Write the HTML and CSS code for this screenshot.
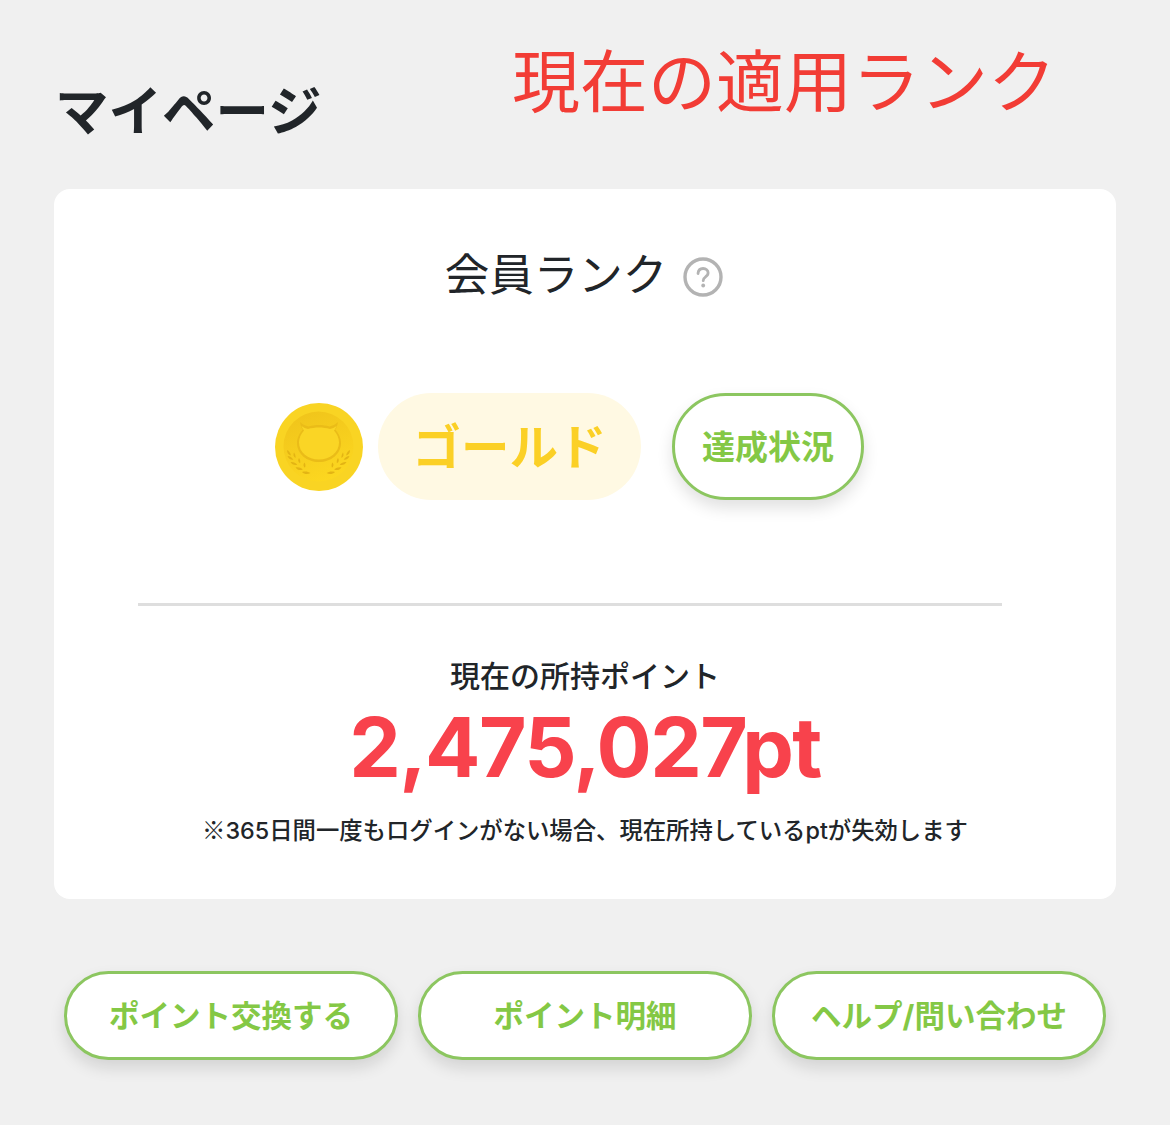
FILE: index.html
```html
<!DOCTYPE html>
<html lang="ja">
<head>
<meta charset="utf-8">
<title>マイページ</title>
<link rel="stylesheet" href="styles.css">
</head>
<body>
<main class="page">
  <div class="annotation">現在の適用ランク</div>
  <h1 class="title">マイページ</h1>
  <section class="card">
    <h2 class="rank-title">会員ランク
      <svg class="help" viewBox="0 0 40 40" aria-hidden="true"><circle cx="20" cy="20" r="18" fill="none" stroke="#b3b3b3" stroke-width="3.4"/><path d="M15 16.500c.3-3.200 2.300-5 5.100-5 2.900 0 5 1.800 5 4.300 0 1.900-.9 3-2.500 4-1.600 1.100-2.400 1.900-2.400 3.900" fill="none" stroke="#b3b3b3" stroke-width="2.800" stroke-linecap="round"/><circle cx="20.200" cy="28.500" r="1.900" fill="#b3b3b3"/></svg>
    </h2>
    <div class="rank-row">
      <svg class="coin" viewBox="0 0 88 88" aria-hidden="true">
        <defs>
          <linearGradient id="coinDisk" x1="0.2" y1="0" x2="0.6" y2="1">
            <stop offset="0" stop-color="#f0c41b"/>
            <stop offset="1" stop-color="#fcd720"/>
          </linearGradient>
        </defs>
        <circle cx="44" cy="44" r="44" fill="#f9d423"/>
        <circle cx="43.500" cy="43.500" r="35" fill="url(#coinDisk)"/>
        <path d="M25 19c.5 3 1.300 5.500 2.800 7.500C24.500 30 22 35 22 40c0 11 10 19 22 19s22-8 22-19c0-5-2.500-10-5.800-13.500 1.500-2 2.300-4.500 2.800-7.500-2.800 2.500-5.500 3.800-8.500 4.500-3.500-1-6.500-1.500-10.500-1.500s-7 .5-10.500 1.500c-3-.7-5.700-2-8.500-4.500z" fill="#eabc18"/>
        <path d="M26.500 23c.5 1.500 1.300 3.200 2.500 4.500-3 3.300-5 7.500-5 12 0 10 9 17 20 17s20-7 20-17c0-4.500-2-8.700-5-12 1.200-1.300 2-3 2.500-4.500-2 1.500-4.200 2.500-6.500 3-3.500-1-7-1.500-11-1.500s-7.500.5-11 1.500c-2.300-.5-4.500-1.500-6.500-3z" fill="#fad525"/>
        <g fill="#e3b414">
          <path d="M12 47c1.800 1 3.400 2.500 3.900 5.400-2.400-.3-3.900-2.500-3.900-5.400z"/>
          <path d="M19 49.500c1.200 1.700 1.700 3.400 1.500 5.500-1.900-.9-2.600-3.400-1.500-5.500z"/>
          <path d="M12.500 53c2.500.2 4.400 1.400 5.900 3.800-2.800.4-5.100-1.300-5.900-3.800z"/>
          <path d="M24 55c1.200 1.700 1.500 3.400 1.100 5.300-2-1-2.500-3.400-1.100-5.300z"/>
          <path d="M15.500 59c2.800-.3 4.900.5 6.800 2.700-2.800.9-5.400-.2-6.800-2.700z"/>
          <path d="M29.500 59.500c1.100 1.700 1.200 3.400.5 5.200-1.700-1.100-2.100-3.400-.5-5.200z"/>
          <path d="M20.500 64.500c2.800-.5 5.200.1 7.300 2-2.800 1.200-5.600.4-7.300-2z"/>
          <path d="M27 69c3.300-.9 6-.5 8.500 1.100-3 1.600-6.200 1.300-8.500-1.100z"/>
          <path d="M75 47c-1.800 1-3.400 2.500-3.900 5.400 2.400-.3 3.900-2.500 3.900-5.400z"/>
          <path d="M68 49.500c-1.200 1.700-1.700 3.400-1.500 5.500 1.900-.9 2.600-3.400 1.500-5.500z"/>
          <path d="M74.500 53c-2.500.2-4.400 1.400-5.900 3.800 2.800.4 5.100-1.300 5.900-3.800z"/>
          <path d="M63 55c-1.200 1.700-1.500 3.400-1.100 5.300 2-1 2.500-3.400 1.100-5.300z"/>
          <path d="M71.500 59c-2.800-.3-4.900.5-6.800 2.700 2.800.9 5.400-.2 6.800-2.700z"/>
          <path d="M57.500 59.500c-1.100 1.700-1.200 3.400-.5 5.200 1.700-1.100 2.100-3.400.5-5.200z"/>
          <path d="M66.500 64.500c-2.800-.5-5.200.1-7.300 2 2.800 1.200 5.600.4 7.300-2z"/>
          <path d="M60 69c-3.300-.9-6-.5-8.500 1.100 3 1.600 6.200 1.300 8.500-1.100z"/>
        </g>
      </svg>
      <div class="rank-pill">ゴールド</div>
      <a class="btn btn-status">達成状況</a>
    </div>
    <hr class="divider">
    <p class="points-label">現在の所持ポイント</p>
    <p class="points-value">2,475,027pt</p>
    <p class="points-note"><span class="note-mark">※</span>365日間一度もログインがない場合、現在所持しているptが失効します</p>
  </section>
  <nav class="actions">
    <a class="btn btn-action">ポイント交換する</a>
    <a class="btn btn-action">ポイント明細</a>
    <a class="btn btn-action">ヘルプ/問い合わせ</a>
  </nav>
</main>
</body>
</html>
```
FILE: styles.css
```css
* { box-sizing: border-box; }
html, body { margin: 0; padding: 0; }
body {
  background: #f0f0f0;
  color: #212529;
  font-family: Inter, "Noto Sans CJK JP", sans-serif;
  height: 1125px;
  overflow: hidden;
}
.page {
  position: relative;
  padding: 78px 54px 0;
}
.annotation {
  position: absolute;
  left: 512px;
  top: 34px;
  font-size: 68px;
  line-height: 97px;
  font-weight: 400;
  color: #f23c35;
  white-space: nowrap;
}
.title {
  margin: 0 0 72px;
  font-size: 53.500px;
  line-height: 39px;
  padding-top: 14px;
  font-weight: 700;
  height: 39px;
  margin-left: 1px;
}
.card {
  background: #fff;
  border-radius: 16px;
  height: 710px;
  display: flex;
  flex-direction: column;
  align-items: center;
  padding-top: 54px;
}
.rank-title {
  margin: 0 2px 0 0;
  height: 64px;
  display: flex;
  align-items: center;
  gap: 16px;
  font-size: 44.500px;
  line-height: 64px;
  font-weight: 400;
}
.help { width: 40px; height: 40px; margin-top: 4px; }
.rank-row {
  margin: 86px 31px 0 0;
  display: flex;
  align-items: center;
}
.coin { width: 88px; height: 88px; margin-right: 15px; }
.rank-pill {
  width: 263px;
  height: 107px;
  border-radius: 54px;
  background: #fff9e3;
  color: #fbd026;
  font-size: 48.500px;
  font-weight: 700;
  display: flex;
  align-items: center;
  justify-content: center;
  padding-bottom: 5px;
  margin-right: 31px;
}
.btn {
  display: flex;
  align-items: center;
  justify-content: center;
  background: #fff;
  border: 3.500px solid #8cc660;
  color: #84c845;
  font-weight: 700;
  padding-bottom: 4px;
  box-shadow: 0 8px 16px rgba(0, 0, 0, 0.12);
}
.btn-status {
  width: 192px;
  height: 107px;
  border-radius: 54px;
  font-size: 33px;
}
.divider {
  width: 864px;
  height: 3px;
  margin: 103px 30px 0 0;
  border: 0;
  background: #dedede;
}
.points-label {
  margin: 48px 0 0;
  font-size: 30px;
  line-height: 44px;
  font-weight: 500;
}
.points-value {
  margin: 0;
  font-size: 82px;
  line-height: 100px;
  font-weight: 700;
  letter-spacing: -1.600px;
  color: #f8424c;
}
.points-note {
  margin: 13px 0 0;
  font-size: 23.350px;
  line-height: 36px;
  font-weight: 500;
  white-space: nowrap;
}
.note-mark {
  font-family: "Noto Sans CJK JP", sans-serif;
  font-weight: 400;
}
.actions {
  margin-top: 72px;
  padding: 0 10px;
  display: grid;
  grid-template-columns: repeat(3, 1fr);
  gap: 20px;
}
.btn-action {
  height: 89px;
  border-radius: 45px;
  font-size: 30.500px;
}
```
